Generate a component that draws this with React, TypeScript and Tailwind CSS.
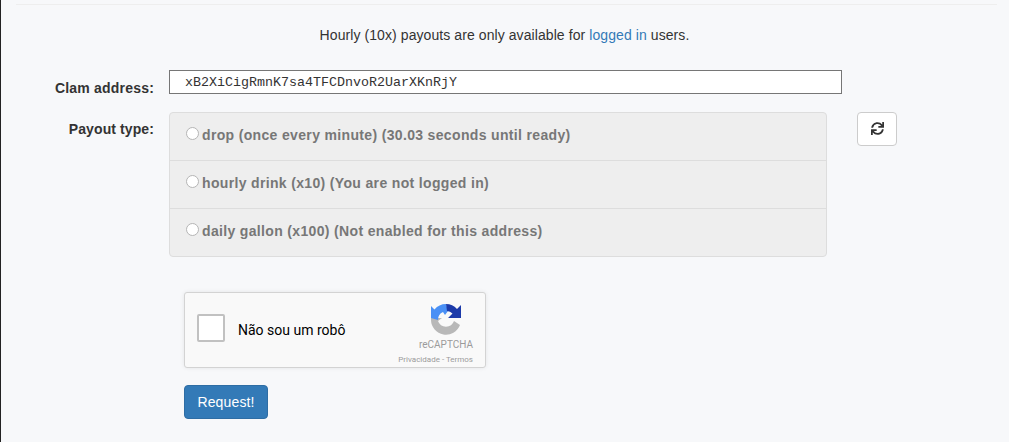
import { FaSync } from "react-icons/fa";

const options = [
  "drop (once every minute) (30.03 seconds until ready)",
  "hourly drink (x10) (You are not logged in)",
  "daily gallon (x100) (Not enabled for this address)",
];

const RecaptchaLogo = () => (
  <svg width="32" height="32" viewBox="0 0 32 32">
    {/* grey lower arc */}
    <path d="M1 15 L1 17 A15 15 0 0 0 30 22 L24 18 A8.5 8.5 0 0 1 8 18 L12 15 Z" fill="#b8b8b8" />
    {/* light blue arc */}
    <path d="M1 15 L8 17 A8.5 8.5 0 0 1 13 9 L15 12 L18 8 L16 1 A15 15 0 0 0 4.5 6.5 L1 3 Z" fill="#4a90f5" />
    {/* dark blue arc */}
    <path d="M16 1 A15 15 0 0 1 27 6 L31 2 L31 15 L18 15 L22.5 10.5 A8.5 8.5 0 0 0 17 8 Z" fill="#1c3aa9" />
  </svg>
);

export default function App() {
  return (
    <div className="w-[1009px] h-[442px] overflow-hidden bg-[#f7f8fa] border-l border-l-[#222] pt-1 font-['Liberation_Sans',Arial,sans-serif] text-sm text-[#333]">
      <div className="ml-[15px] mr-[12px] h-px bg-[#eeeeee]" />

      <p className="mt-5 h-5 leading-5 text-center pr-[1px] tracking-[0.08px]">
        Hourly (10x) payouts are only available for{" "}
        <a className="text-[#337ab7]">logged in</a> users.
      </p>

      <div className="mt-[25px] flex">
        <label className="w-[153px] pt-2 text-right font-bold leading-5 tracking-[0.2px]">Clam address:</label>
        <input
          readOnly
          value="xB2XiCigRmnK7sa4TFCDnvoR2UarXKnRjY"
          className="ml-[15px] w-[673px] h-6 border border-[#767676] bg-white pl-[15px] font-['Liberation_Mono',monospace] text-[13.33px] text-[#333] outline-none"
        />
      </div>

      <div className="mt-[14px] flex items-start">
        <label className="w-[153px] pt-[7px] text-right font-bold leading-5 tracking-[0.1px]">Payout type:</label>
        <div className="ml-[15px] w-[658px] rounded border border-[#dddddd] bg-[#eeeeee]">
          {options.map((text, i) => (
            <div
              key={text}
              className={`flex items-start pl-4 pt-3 font-bold leading-5 tracking-[0.34px] text-[#777777] ${i > 0 ? "h-12 border-t border-[#dddddd]" : "h-[47px]"}`}
            >
              <span className="mt-[2px] mr-[3px] size-[13px] rounded-full border border-[#b5b5b5] bg-white" />
              {text}
            </div>
          ))}
        </div>
        <button className="ml-[30px] flex h-[34px] w-10 items-center justify-center rounded border border-[#cccccc] bg-white pb-[2px]">
          <FaSync size={13} color="#333" />
        </button>
      </div>

      <div className="ml-[183px] mt-[35px] flex h-[76px] w-[302px] rounded-[3px] border border-[#d3d3d3] bg-[#f9f9f9] shadow-[0_0_4px_rgba(0,0,0,0.08)] font-['Roboto',sans-serif]">
        <span className="ml-3 mt-[21px] size-7 rounded-[2px] border-2 border-[#c1c1c1] bg-white" />
        <span className="ml-[13px] mt-[27px] text-sm leading-5 text-black">Não sou um robô</span>
        <div className="ml-auto mr-3 flex w-[80px] flex-col items-end pt-[10px]">
          <span className="mr-[11px]">
            <RecaptchaLogo />
          </span>
          <span className="mt-[4px] text-[10px] leading-3 text-[#9b9b9b]">reCAPTCHA</span>
          <span className="mt-[4px] whitespace-nowrap text-[8px] leading-[10px] text-[#9b9b9b]">Privacidade - Termos</span>
        </div>
      </div>

      <button className="ml-[183px] mt-[17px] block h-[34px] w-[84px] rounded border border-[#2e6da4] bg-[#337ab7] text-sm tracking-[0.15px] text-white">
        Request!
      </button>
    </div>
  );
}
